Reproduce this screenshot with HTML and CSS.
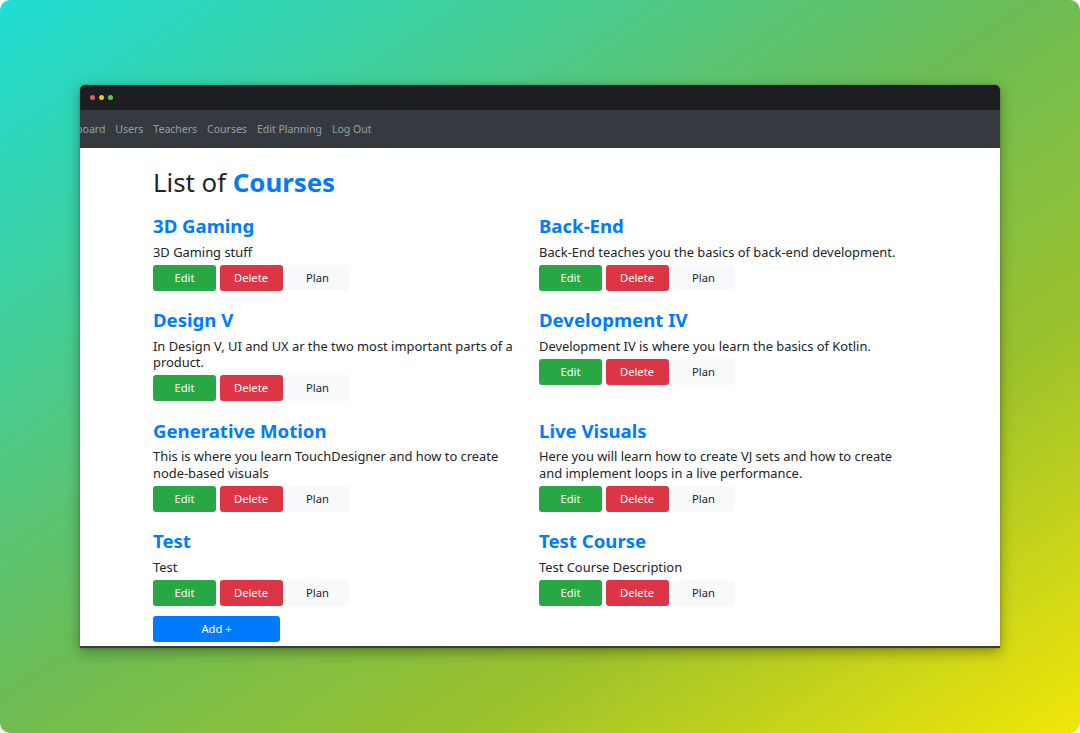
FILE: index.html
```html
<!DOCTYPE html>
<html lang="en">
<head>
<meta charset="utf-8">
<title>List of Courses</title>
<link rel="stylesheet" href="styles.css">
</head>
<body>
<div class="stage">
  <div class="window">
    <div class="titlebar">
      <span class="dot dot-red"></span>
      <span class="dot dot-yellow"></span>
      <span class="dot dot-green"></span>
    </div>
    <nav class="navbar">
      <ul class="nav">
        <li class="nav-link">Dashboard</li>
        <li class="nav-link">Users</li>
        <li class="nav-link">Teachers</li>
        <li class="nav-link">Courses</li>
        <li class="nav-link">Edit Planning</li>
        <li class="nav-link">Log Out</li>
      </ul>
    </nav>
    <main class="content">
      <h1 class="page-title">List of <strong class="accent">Courses</strong></h1>
      <div class="course-grid">
        <section class="course">
          <h3 class="course-name">3D Gaming</h3>
          <p class="course-desc">3D Gaming stuff</p>
          <div class="actions"><button class="btn btn-edit">Edit</button><button class="btn btn-delete">Delete</button><button class="btn btn-plan">Plan</button></div>
        </section>
        <section class="course">
          <h3 class="course-name">Back-End</h3>
          <p class="course-desc">Back-End teaches you the basics of back-end development.</p>
          <div class="actions"><button class="btn btn-edit">Edit</button><button class="btn btn-delete">Delete</button><button class="btn btn-plan">Plan</button></div>
        </section>
        <section class="course">
          <h3 class="course-name">Design V</h3>
          <p class="course-desc">In Design V, UI and UX ar the two most important parts of a product.</p>
          <div class="actions"><button class="btn btn-edit">Edit</button><button class="btn btn-delete">Delete</button><button class="btn btn-plan">Plan</button></div>
        </section>
        <section class="course">
          <h3 class="course-name">Development IV</h3>
          <p class="course-desc">Development IV is where you learn the basics of Kotlin.</p>
          <div class="actions"><button class="btn btn-edit">Edit</button><button class="btn btn-delete">Delete</button><button class="btn btn-plan">Plan</button></div>
        </section>
        <section class="course">
          <h3 class="course-name">Generative Motion</h3>
          <p class="course-desc">This is where you learn TouchDesigner and how to create node-based visuals</p>
          <div class="actions"><button class="btn btn-edit">Edit</button><button class="btn btn-delete">Delete</button><button class="btn btn-plan">Plan</button></div>
        </section>
        <section class="course">
          <h3 class="course-name">Live Visuals</h3>
          <p class="course-desc">Here you will learn how to create VJ sets and how to create and implement loops in a live performance.</p>
          <div class="actions"><button class="btn btn-edit">Edit</button><button class="btn btn-delete">Delete</button><button class="btn btn-plan">Plan</button></div>
        </section>
        <section class="course">
          <h3 class="course-name">Test</h3>
          <p class="course-desc">Test</p>
          <div class="actions"><button class="btn btn-edit">Edit</button><button class="btn btn-delete">Delete</button><button class="btn btn-plan">Plan</button></div>
        </section>
        <section class="course">
          <h3 class="course-name">Test Course</h3>
          <p class="course-desc">Test Course Description</p>
          <div class="actions"><button class="btn btn-edit">Edit</button><button class="btn btn-delete">Delete</button><button class="btn btn-plan">Plan</button></div>
        </section>
      </div>
      <button class="btn btn-add">Add +</button>
    </main>
  </div>
</div>
</body>
</html>
```

FILE: styles.css
```css
* { box-sizing: border-box; }

html, body {
  margin: 0;
  padding: 0;
  background: #ffffff;
}

body {
  font-family: "Noto Sans", "Open Sans", sans-serif;
  color: #212529;
}

.stage {
  width: 1080px;
  height: 733px;
  border-radius: 10px;
  background: linear-gradient(146deg, #1fdcd4 0%, #3fcf9c 22%, #6cbc55 48%, #9cc22c 72%, #f2e608 100%);
  padding: 85px 80px 0 80px;
  overflow: hidden;
}

.window {
  width: 920px;
  height: 563px;
  display: flex;
  flex-direction: column;
  border-radius: 5px 5px 0 0;
  overflow: hidden;
  box-shadow: 0 4px 14px rgba(0, 0, 0, 0.35), 0 0 2px rgba(0, 0, 0, 0.3);
}

.titlebar {
  height: 25px;
  flex: none;
  background: #1c1e21;
  display: flex;
  align-items: center;
  gap: 3.5px;
  padding: 0 0 0 9.5px;
}

.dot {
  width: 5.5px;
  height: 5.5px;
  border-radius: 50%;
}
.dot-red { background: #e85a60; }
.dot-yellow { background: #e4d30a; }
.dot-green { background: #5ec552; }

.navbar {
  height: 38px;
  flex: none;
  background: #343a40;
  display: flex;
  align-items: center;
  overflow: hidden;
}

.nav {
  list-style: none;
  margin: 0 0 0 -34px;
  padding: 0;
  display: flex;
  white-space: nowrap;
}

.nav-link {
  font-size: 10.5px;
  line-height: 16px;
  padding: 0 5px;
  color: rgba(255, 255, 255, 0.5);
}

.content {
  flex: 1;
  background: #ffffff;
  padding: 18px 0 0 73px;
  border-bottom: 2px solid #3a3b3c;
}

.page-title {
  margin: 0 0 15px 0;
  font-size: 25.8px;
  line-height: 33px;
  font-weight: 400;
  color: #212529;
}

.accent {
  color: #007bff;
  font-weight: 700;
}

.course-grid {
  display: grid;
  grid-template-columns: 386px 386px;
  row-gap: 17.4px;
}

.course {
  padding-right: 16px;
}

.course-name {
  margin: 0 0 6.5px 0;
  font-size: 18.6px;
  line-height: 23.2px;
  font-weight: 700;
  color: #007bff;
}

.course-desc {
  margin: 0 0 4.5px 0;
  font-size: 12.9px;
  line-height: 16.5px;
  color: #212529;
}

.actions {
  display: flex;
  gap: 3.5px;
}

.btn {
  width: 63px;
  height: 26px;
  border: 0;
  border-radius: 3px;
  font-family: inherit;
  font-size: 11.2px;
  line-height: 26px;
  padding: 0;
  color: #ffffff;
  cursor: pointer;
}

.btn-edit { background: #28a745; }
.btn-delete { background: #dc3545; }
.btn-plan { background: #f8f9fa; color: #212529; }

.btn-add {
  margin-top: 10.5px;
  width: 127px;
  background: #007bff;
}
```
